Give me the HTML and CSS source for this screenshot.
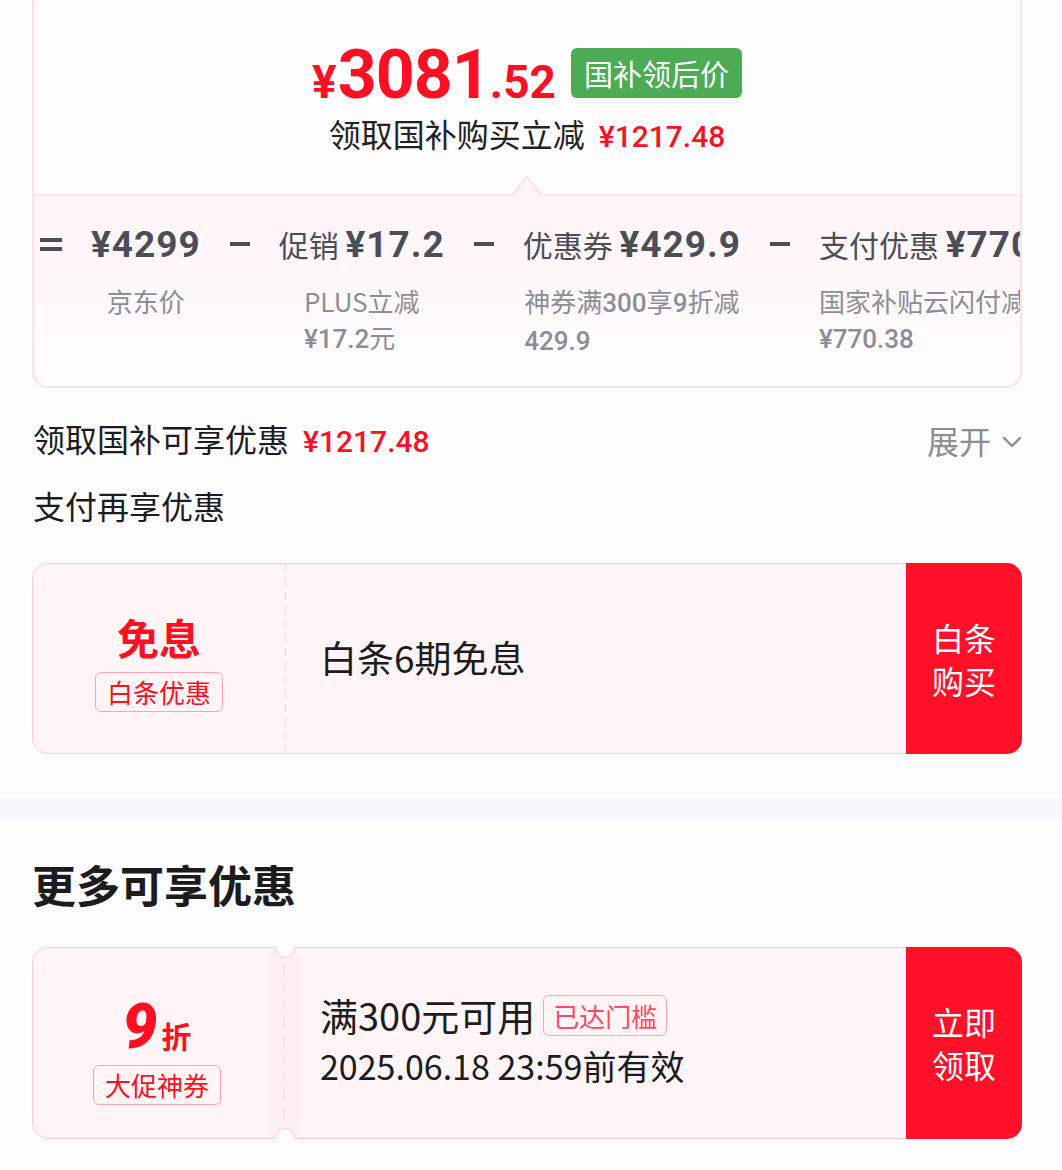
FILE: index.html
```html
<!DOCTYPE html>
<html lang="zh-CN">
<head>
<meta charset="utf-8">
<title>国补优惠</title>
<link rel="stylesheet" href="styles.css">
</head>
<body>
<div class="wrap">
  <section class="top-card">
    <div class="summary">
      <div class="price-row">
        <span class="price"><span class="yen">¥</span><span class="int">3081</span><span class="dec">.52</span></span>
        <span class="badge">国补领后价</span>
      </div>
      <div class="save-row">领取国补购买立减<span class="save-amt">¥1217.48</span></div>
      <svg class="pointer" width="32" height="21" viewBox="0 0 32 21">
        <path d="M0 21 L16 2 L32 21 Z" fill="#fff4f7"/>
        <path d="M1 20.5 L16 2 L31 20.5" fill="none" stroke="#fcdfe7" stroke-width="2"/>
      </svg>
    </div>
    <div class="formula">
      <div class="op"><span class="eq"><i></i><i></i></span></div>
      <div class="term">
        <div class="term-head"><span class="num">¥4299</span></div>
        <div class="term-sub">京东价</div>
      </div>
      <div class="op"><span class="minus"></span></div>
      <div class="term">
        <div class="term-head">促销 <span class="num">¥17.2</span></div>
        <div class="term-sub">PLUS立减<br><span class="sub-num">¥17.2</span>元</div>
      </div>
      <div class="op"><span class="minus"></span></div>
      <div class="term">
        <div class="term-head">优惠券 <span class="num">¥429.9</span></div>
        <div class="term-sub">神券满<span class="sub-num">300</span>享<span class="sub-num">9</span>折减<br><span class="sub-num">429.9</span></div>
      </div>
      <div class="op"><span class="minus"></span></div>
      <div class="term term-left">
        <div class="term-head">支付优惠 <span class="num">¥770.38</span></div>
        <div class="term-sub">国家补贴云闪付减<br><span class="sub-num">¥770.38</span></div>
      </div>
    </div>
  </section>

  <div class="line-row first">
    <div class="line-title">领取国补可享优惠<span class="red-amt">¥1217.48</span></div>
    <div class="expand">展开<svg width="20" height="12" viewBox="0 0 20 12"><polyline points="2,2 10,10 18,2" fill="none" stroke="#8e8e8e" stroke-width="2.4" stroke-linecap="round" stroke-linejoin="round"/></svg></div>
  </div>
  <div class="line-row second">
    <div class="line-title">支付再享优惠</div>
  </div>

  <div class="card card-pay">
    <div class="card-left">
      <div class="big-red">免息</div>
      <div class="tag">白条优惠</div>
    </div>
    <div class="dash-col"><span class="dash"></span></div>
    <div class="card-mid mid-pay">
      <div class="mid-main">白条6期免息</div>
    </div>
    <div class="card-btn">白条<br>购买</div>
  </div>
</div>

<div class="band"></div>

<div class="wrap">
  <h2 class="more-title">更多可享优惠</h2>
  <div class="card card-coupon">
    <div class="card-left left-coupon">
      <div class="disc"><span class="disc-num">9</span><span class="disc-unit">折</span></div>
      <div class="tag">大促神券</div>
    </div>
    <div class="strip">
      <span class="notch notch-top"></span>
      <span class="dash dash-strip"></span>
      <span class="notch notch-bottom"></span>
    </div>
    <div class="card-mid mid-coupon">
      <div class="mid-main">满300元可用<span class="tag tag-light">已达门槛</span></div>
      <div class="mid-date">2025.06.18 23:59前有效</div>
    </div>
    <div class="card-btn">立即<br>领取</div>
  </div>
</div>
</body>
</html>
```

FILE: styles.css
```css
* { box-sizing: border-box; }

html, body {
  margin: 0;
  padding: 0;
}

body {
  background: #fcfcfd;
  font-family: "Noto Sans CJK SC", "Noto Sans", sans-serif;
  color: #1c1c1e;
  width: 1062px;
  overflow: hidden;
}

.wrap {
  padding: 0 40px 0 32px;
}

/* ---------- top card ---------- */
.top-card {
  margin-top: -14px;
  border: 2px solid #fde0e8;
  border-radius: 16px;
  background: #fdfcfd;
  overflow: hidden;
}

.summary {
  position: relative;
  padding: 60px 0 35px;
}

.price-row {
  display: flex;
  justify-content: center;
  align-items: flex-end;
  gap: 15px;
  height: 50px;
}

.price {
  font-family: Roboto, "Liberation Sans", sans-serif;
  font-weight: 700;
  color: #ff0f23;
  font-size: 68px;
  line-height: 50px;
  height: 50px;
  margin-bottom: -2px;
  white-space: nowrap;
}

.price .yen {
  font-size: 46px;
  line-height: 0;
  margin-right: 1px;
}

.price .int {
  font-size: 68px;
  line-height: 0;
  letter-spacing: -1px;
}

.price .dec {
  font-size: 46px;
  line-height: 0;
}

.badge {
  height: 50px;
  line-height: 50px;
  padding: 0 13px;
  background: #4dab55;
  color: #fff;
  font-size: 29px;
  border-radius: 6px;
}

.save-row {
  margin-top: 13px;
  text-align: center;
  font-size: 32px;
  line-height: 44px;
  color: #222;
}

.save-amt {
  margin-left: 14px;
  font-family: Roboto, "Liberation Sans", sans-serif;
  font-weight: 500;
  font-size: 30px;
  color: #ff0f23;
}

.pointer {
  position: absolute;
  left: 50%;
  bottom: -2px;
  margin-left: -16px;
  display: block;
}

.formula {
  display: flex;
  align-items: flex-start;
  gap: 29px;
  padding: 26px 0 27px 6px;
  border-top: 2px solid #fde6ec;
  background: linear-gradient(to bottom, #fff4f7, #fffcfd);
  white-space: nowrap;
  overflow: hidden;
  color: #4b4e57;
}

.op {
  height: 44px;
  display: flex;
  align-items: center;
  flex: none;
}

.eq {
  display: flex;
  flex-direction: column;
  gap: 5px;
  width: 22px;
}

.eq i {
  display: block;
  height: 4px;
  background: #4b4e57;
}

.minus {
  display: block;
  width: 20px;
  height: 4px;
  background: #4b4e57;
}

.term {
  display: flex;
  flex-direction: column;
  align-items: center;
  flex: none;
}

.term-left {
  align-items: flex-start;
}

.term-head {
  font-size: 30px;
  line-height: 44px;
}

.num {
  font-family: Roboto, "Liberation Sans", sans-serif;
  font-weight: 700;
  font-size: 37px;
  letter-spacing: 1px;
}

.term-sub {
  display: inline-block;
  margin-top: 16px;
  font-size: 26px;
  line-height: 36px;
  color: #8b8e97;
  text-align: left;
}

.sub-num {
  font-family: Roboto, "Liberation Sans", sans-serif;
  font-weight: 500;
  font-size: 26px;
}

/* ---------- discount lines ---------- */
.line-row {
  display: flex;
  justify-content: space-between;
  align-items: center;
  font-size: 32px;
  line-height: 44px;
  padding-left: 1px;
}

.line-row.first { margin-top: 28px; }
.line-row.second { margin-top: 19px; }

.line-title { color: #1c1c1e; }

.red-amt {
  margin-left: 14px;
  font-family: Roboto, "Liberation Sans", sans-serif;
  font-weight: 500;
  font-size: 30px;
  color: #ff0f23;
}

.expand {
  display: flex;
  align-items: center;
  gap: 11px;
  color: #8e8e8e;
}

.expand svg { display: block; margin-top: 4px; }

/* ---------- cards ---------- */
.card {
  display: flex;
  border: 1px solid #ffccd6;
  border-radius: 16px;
  background: #fff5f7;
  margin-top: 36px;
}

.card-pay { height: 191px; }

.card-left {
  width: 252px;
  flex: none;
  display: flex;
  flex-direction: column;
  align-items: center;
  justify-content: center;
  padding-top: 6px;
}

.big-red {
  font-size: 42px;
  font-weight: 700;
  line-height: 50px;
  color: #ff0f23;
}

.tag {
  display: inline-block;
  border: 1px solid #ffa2b5;
  border-radius: 6px;
  color: #ff0f23;
  font-size: 26px;
  line-height: 38px;
  padding: 0 11px;
  margin-top: 10px;
  background: transparent;
}

.dash-col {
  width: 1px;
  flex: none;
  display: flex;
}

.dash {
  display: block;
  width: 1px;
  flex: 1 1 auto;
  background: repeating-linear-gradient(to bottom, #ffd3dc 0 8px, transparent 8px 14px);
}

.card-mid {
  flex: 1;
  display: flex;
  flex-direction: column;
  justify-content: center;
  padding-left: 34px;
}

.mid-pay {
  padding-bottom: 4px;
}

.mid-main {
  font-size: 37px;
  line-height: 50px;
  color: #1c1c1e;
  display: flex;
  align-items: center;
}

.card-btn {
  width: 116px;
  flex: none;
  background: #ff1029;
  color: #fff;
  border-radius: 0 15px 15px 0;
  display: flex;
  align-items: center;
  justify-content: center;
  text-align: center;
  font-size: 32px;
  line-height: 43px;
  margin: -1px -1px -1px 0;
}

/* ---------- band ---------- */
.band {
  margin-top: 44px;
  height: 21px;
  background: #f6f7fa;
}

.more-title {
  margin: 37px 0 0 0;
  font-size: 44px;
  font-weight: 700;
  line-height: 56px;
  color: #1c1c1e;
}

/* ---------- coupon card ---------- */
.card-coupon {
  margin-top: 35px;
  height: 192px;
}

.left-coupon {
  width: 235px;
  padding-left: 13px;
  padding-top: 18px;
  border-radius: 15px 0 0 15px;
}

.disc {
  display: flex;
  align-items: baseline;
  color: #ff0f23;
  line-height: 56px;
  height: 56px;
}

.disc-num {
  font-family: Roboto, "Liberation Sans", sans-serif;
  font-weight: 900;
  font-style: italic;
  font-size: 62px;
}

.disc-unit {
  font-size: 30px;
  font-weight: 700;
  margin-left: 4px;
}

.strip {
  position: relative;
  width: 33px;
  flex: none;
  background: #fdeff3;
  display: flex;
  justify-content: center;
  padding: 16px 0;
}

.dash-strip {
  flex: none;
  width: 1px;
  background: repeating-linear-gradient(to bottom, #ffd3dc 0 10px, transparent 10px 18px);
}

.notch {
  position: absolute;
  left: 50%;
  margin-left: -10px;
  width: 20px;
  height: 11px;
  background: #fcfcfd;
  border: 1px solid #ffccd6;
}

.notch-top {
  top: -1px;
  border-top: none;
  border-radius: 0 0 10px 10px;
}

.notch-bottom {
  bottom: -1px;
  border-bottom: none;
  border-radius: 10px 10px 0 0;
}

.mid-coupon {
  padding-left: 19px;
  padding-bottom: 8px;
}

.mid-coupon .mid-main {
  font-size: 38px;
}

.tag-light {
  margin: 0 0 0 8px;
  color: #ff4a64;
  font-size: 26px;
  line-height: 39px;
  padding: 0 9px;
}

.mid-date {
  font-size: 34px;
  line-height: 44px;
  margin-top: 4px;
  color: #1c1c1e;
}
```
